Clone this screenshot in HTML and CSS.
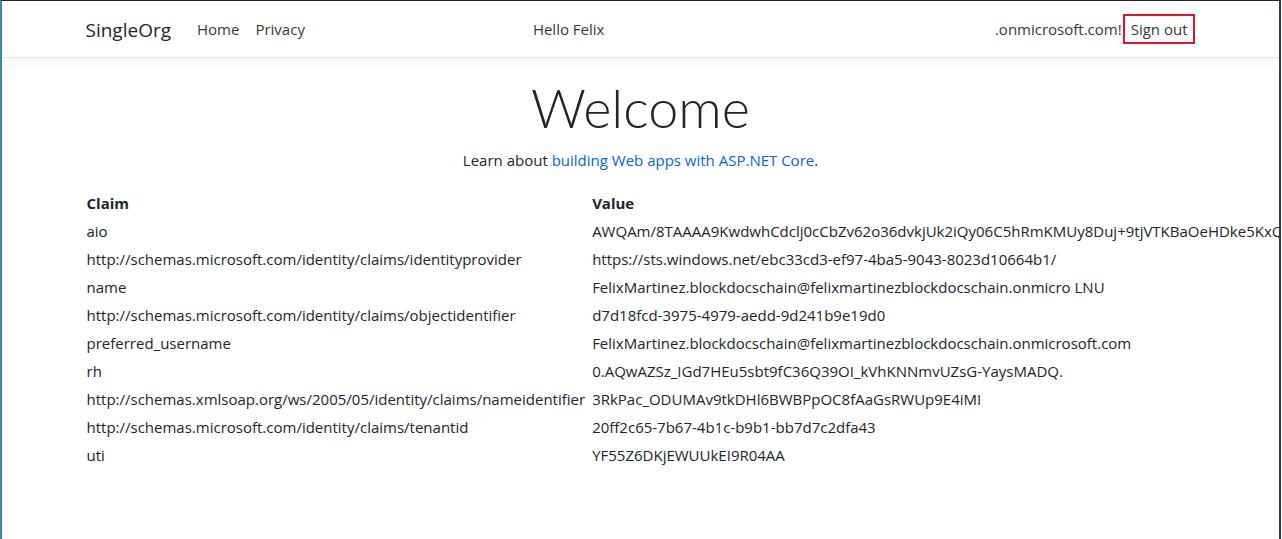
FILE: index.html
```html
<!DOCTYPE html>
<html lang="en">
<head>
<meta charset="utf-8">
<title>SingleOrg</title>
<link rel="stylesheet" href="styles.css">
</head>
<body>
<div class="frame">
  <header class="navbar">
    <div class="container nav-inner">
      <a class="brand" href="#">SingleOrg</a>
      <ul class="nav-list">
        <li><a class="nav-link" href="#">Home</a></li>
        <li><a class="nav-link" href="#">Privacy</a></li>
      </ul>
      <span class="hello">Hello Felix</span>
      <div class="nav-right">
        <span class="user">.onmicrosoft.com!</span>
        <a class="signout" href="#">Sign out</a>
      </div>
    </div>
  </header>
  <main class="container main">
    <div class="intro">
      <h1 class="display">Welcome</h1>
      <p class="lead">Learn about <a href="#">building Web apps with ASP.NET Core</a>.</p>
    </div>
    <table class="claims">
      <thead>
        <tr><th>Claim</th><th>Value</th></tr>
      </thead>
      <tbody>
        <tr><td>aio</td><td>AWQAm/8TAAAA9KwdwhCdclj0cCbZv62o36dvkjUk2iQy06C5hRmKMUy8Duj+9tjVTKBaOeHDke5KxQ2nLz8pWq3rT</td></tr>
        <tr><td>http://schemas.microsoft.com/identity/claims/identityprovider</td><td>https://sts.windows.net/ebc33cd3-ef97-4ba5-9043-8023d10664b1/</td></tr>
        <tr><td>name</td><td>FelixMartinez.blockdocschain@felixmartinezblockdocschain.onmicro LNU</td></tr>
        <tr><td>http://schemas.microsoft.com/identity/claims/objectidentifier</td><td>d7d18fcd-3975-4979-aedd-9d241b9e19d0</td></tr>
        <tr><td>preferred_username</td><td>FelixMartinez.blockdocschain@felixmartinezblockdocschain.onmicrosoft.com</td></tr>
        <tr><td>rh</td><td>0.AQwAZSz_IGd7HEu5sbt9fC36Q39OI_kVhKNNmvUZsG-YaysMADQ.</td></tr>
        <tr><td>http://schemas.xmlsoap.org/ws/2005/05/identity/claims/nameidentifier</td><td>3RkPac_ODUMAv9tkDHl6BWBPpOC8fAaGsRWUp9E4iMI</td></tr>
        <tr><td>http://schemas.microsoft.com/identity/claims/tenantid</td><td>20ff2c65-7b67-4b1c-b9b1-bb7d7c2dfa43</td></tr>
        <tr><td>uti</td><td>YF55Z6DKjEWUUkEI9R04AA</td></tr>
      </tbody>
    </table>
  </main>
</div>
</body>
</html>
```
FILE: styles.css
```css
html, body {
  margin: 0;
  padding: 0;
  overflow: hidden;
  background: #ffffff;
}
body {
  font-family: "Open Sans", "Noto Sans", sans-serif;
  font-size: 15px;
  line-height: 24px;
  color: #212529;
}
.frame {
  box-sizing: border-box;
  width: 1281px;
  height: 539px;
  border-top: 1px solid #2b2033;
  border-left: 2px solid #3b89a6;
  border-right: 2px solid #2f3d48;
  overflow: hidden;
}
.container {
  width: 1110px;
  margin: 0 auto;
  padding: 0 15px;
}
.navbar {
  height: 56px;
  border-bottom: 1px solid #e3e3e3;
  box-shadow: 0 4px 12px rgba(0, 0, 0, 0.05);
}
.nav-inner {
  display: flex;
  align-items: center;
  height: 56px;
}
.brand {
  font-size: 19px;
  color: #212529;
  text-decoration: none;
  margin-right: 18px;
  margin-top: 2px;
}
.nav-list {
  display: flex;
  list-style: none;
  margin: 0;
  padding: 0;
}
.nav-link {
  display: block;
  padding: 8px 8px;
  color: #343a40;
  text-decoration: none;
}
.hello {
  margin-left: 220px;
  color: #343a40;
}
.nav-right {
  margin-left: auto;
  display: flex;
  align-items: center;
  color: #343a40;
}
.user {
  margin-right: 1px;
}
.signout {
  display: block;
  border: 2px solid #e81123;
  padding: 1px 5px 1px 6px;
  color: #343a40;
  text-decoration: none;
  margin-right: 1px;
}
.main {
  padding-top: 18px;
}
.intro {
  text-align: center;
}
.display {
  font-family: "Lato", "Open Sans", sans-serif;
  font-size: 54px;
  font-weight: 300;
  line-height: 64px;
  margin: 0;
}
.lead {
  margin: 8px 0 16px 0;
}
.lead a {
  color: #0366d6;
  text-decoration: none;
}
.claims {
  border-collapse: separate;
  border-spacing: 2px;
  margin-left: -2px;
  white-space: nowrap;
}
.claims th, .claims td {
  padding: 1px;
  text-align: left;
  vertical-align: top;
}
.claims th:first-child, .claims td:first-child {
  padding-right: 4px;
}
.claims th {
  font-weight: 700;
}
```
